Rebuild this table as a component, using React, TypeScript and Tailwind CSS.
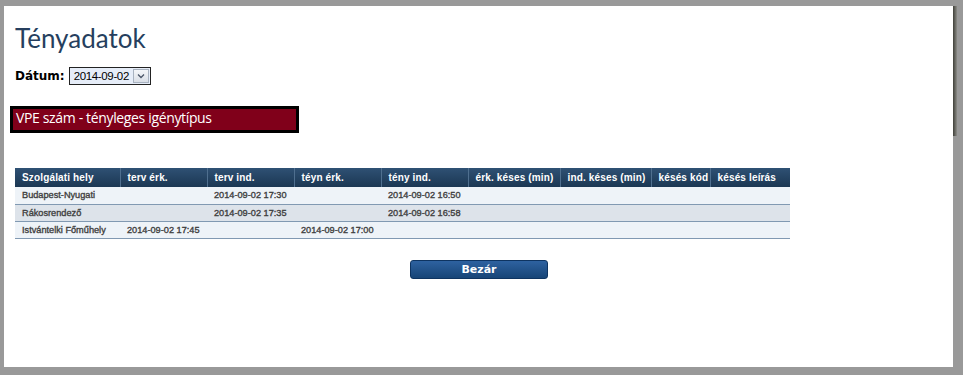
import React from "react";

const cols = [
  { label: "Szolgálati hely", w: 105 },
  { label: "terv érk.", w: 87 },
  { label: "terv ind.", w: 87 },
  { label: "téyn érk.", w: 87 },
  { label: "tény ind.", w: 87 },
  { label: "érk. késes (min)", w: 92 },
  { label: "ind. késes (min)", w: 91 },
  { label: "késés kód", w: 59 },
  { label: "késés leírás", w: 80 },
];

const rows = [
  ["Budapest-Nyugati", "", "2014-09-02 17:30", "", "2014-09-02 16:50", "", "", "", ""],
  ["Rákosrendező", "", "2014-09-02 17:35", "", "2014-09-02 16:58", "", "", "", ""],
  ["Istvántelki Főműhely", "2014-09-02 17:45", "", "2014-09-02 17:00", "", "", "", "", ""],
];

export default function App() {
  return (
    <div className="w-[963px] h-[375px] bg-[#999999] flex flex-row pt-[6px] pl-[4px] overflow-hidden">
      <div className="w-[949px] h-[361px] bg-white pl-[11px] flex flex-col">
        <h1
          className="text-[26px] leading-[30px] mt-[17px] text-[#263f5e]"
          style={{ fontFamily: "Lato, 'Open Sans', sans-serif", fontWeight: 400 }}
        >
          Tényadatok
        </h1>
        <div className="flex flex-row items-center mt-[14px] h-[18px]">
          <span
            className="text-[12px] font-bold text-black"
            style={{ fontFamily: "'DejaVu Sans', Verdana, sans-serif" }}
          >
            Dátum:
          </span>
          <div className="ml-[4px] w-[82px] h-[18px] border border-[#222] bg-[#e6edf8] flex flex-row items-center">
            <span
              className="text-[11.5px] leading-[16px] text-black pl-[4px] flex-1"
              style={{ fontFamily: "'Liberation Sans', Arial, sans-serif", letterSpacing: "-0.35px" }}
            >
              2014-09-02
            </span>
            <div className="w-[16px] h-[14px] mr-[1px] border border-[#a8b2c0] bg-gradient-to-b from-[#f4f6f9] to-[#d9dee6] flex items-center justify-center">
              <svg width="8" height="6" viewBox="0 0 8 6">
                <path d="M1 1.5 L4 4.5 L7 1.5" fill="none" stroke="#4a5568" strokeWidth="1.3" />
              </svg>
            </div>
          </div>
        </div>
        <div className="mt-[21px] ml-[-5px] w-[289px] h-[27px] border-[3px] border-black bg-[#80001a] flex items-center">
          <span
            className="text-white text-[14px] pl-[3px] leading-[18px] mt-[-4px]"
            style={{ fontFamily: "'Open Sans', 'Noto Sans', sans-serif", letterSpacing: "-0.35px" }}
          >
            VPE szám - tényleges igénytípus
          </span>
        </div>
        <table
          className="mt-[35px] border-collapse table-fixed"
          style={{ width: 775, fontFamily: "'Liberation Sans', Arial, sans-serif" }}
        >
          <thead>
            <tr className="h-[19px] bg-gradient-to-b from-[#2f5174] to-[#1b3753]">
              {cols.map((c, i) => (
                <th
                  key={i}
                  style={{ width: c.w }}
                  className={`text-left text-white text-[10px] font-bold px-[7px] py-0 leading-[19px] whitespace-nowrap tracking-[0.15px] ${
                    i < cols.length - 1 ? "border-r border-[#4f6f8f]" : ""
                  }`}
                >
                  {c.label}
                </th>
              ))}
            </tr>
          </thead>
          <tbody>
            {rows.map((r, ri) => (
              <tr
                key={ri}
                className={`h-[17px] border-b border-[#8199b2] ${ri % 2 === 1 ? "bg-[#dde3ea]" : "bg-[#eef3f8]"}`}
              >
                {r.map((cell, ci) => (
                  <td
                    key={ci}
                    className="text-[9.2px] text-[#404040] px-[7px] py-0 leading-[16px] whitespace-nowrap overflow-hidden [-webkit-text-stroke:0.35px_#404040]"
                  >
                    {cell}
                  </td>
                ))}
              </tr>
            ))}
          </tbody>
        </table>
        <div className="flex flex-row mt-[21px] pl-[395px]">
          <button
            className="w-[138px] h-[19px] rounded-[3px] border border-[#0e3461] bg-gradient-to-b from-[#2e62a0] to-[#174577] text-white text-[11px] font-bold leading-[17px]"
            style={{ fontFamily: "'DejaVu Sans', Verdana, sans-serif" }}
          >
            Bezár
          </button>
        </div>
      </div>
      <div className="w-[4px] h-[130px] bg-gradient-to-r from-[#2a2a22] to-[#8a8a84] opacity-80" />
    </div>
  );
}
